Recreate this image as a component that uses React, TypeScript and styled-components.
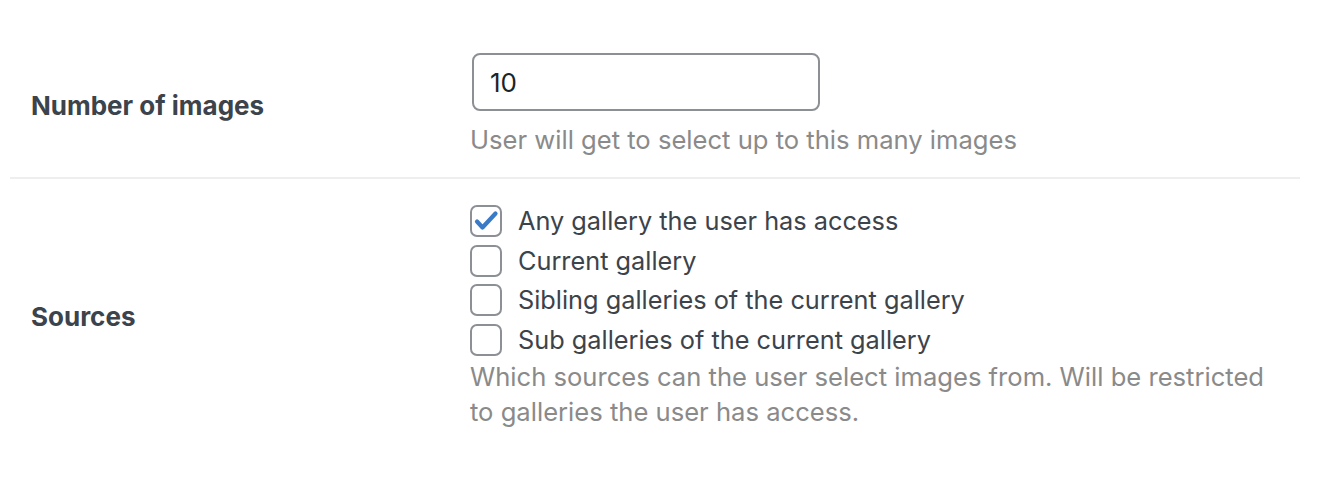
import React from 'react';
import styled, { createGlobalStyle } from 'styled-components';

const GlobalStyle = createGlobalStyle`
	body {
		margin: 0;
		background: #ffffff;
		font-family: Inter, "Liberation Sans", Arial, sans-serif;
		color: #3c434a;
	}
`;

const Page = styled.div`
	padding: 27px 40px 0 10px;
	width: 1290px;
`;

const Row = styled.div`
	display: grid;
	grid-template-columns: 460px 1fr;
	align-items: center;
	padding: 26px 0 20px;

	& + & {
		border-top: 2px solid #eeeeee;
		padding-top: 26px;
	}
`;

const Label = styled.div`
	padding-left: 21px;
	font-size: 26px;
	font-weight: 700;
	color: #3c434a;
`;

const Field = styled.div`
	display: flex;
	flex-direction: column;
	align-items: flex-start;
`;

const NumberInput = styled.input`
	box-sizing: border-box;
	width: 348px;
	height: 58px;
	padding: 0 16px;
	margin-left: 2px;
	border: 2px solid #8c8f94;
	border-radius: 8px;
	font-family: Inter, "Liberation Sans", Arial, sans-serif;
	font-size: 26px;
	color: #1d2327;
	outline: none;
`;

const Description = styled.p<{ $gap?: number }>`
	margin: ${p => p.$gap ?? 11}px 0 0;
	font-size: 25.6px;
	line-height: 35px;
	color: #8a8a8a;
	max-width: 800px;
`;

const Options = styled.div`
	display: flex;
	flex-direction: column;
	gap: 7.5px;
`;

const Option = styled.label`
	display: flex;
	align-items: center;
	gap: 16px;
	font-size: 25.3px;
	line-height: 32px;
	color: #3c434a;
`;

const Box = styled.span`
	position: relative;
	box-sizing: border-box;
	width: 32px;
	height: 32px;
	border: 2px solid #8c8f94;
	border-radius: 7px;
	background: #fff;
	flex-shrink: 0;

	svg {
		position: absolute;
		left: -2px;
		top: -2px;
	}
`;

const Check = () => (
	<svg width="32" height="32" viewBox="0 0 32 32">
		<path d="M7 16.5 L12.5 22.5 L25.5 8.5" fill="none" stroke="#3a7bc8" strokeWidth="4.2" strokeLinecap="round" strokeLinejoin="round" />
	</svg>
);

const sources = [
	{ label: 'Any gallery the user has access', checked: true },
	{ label: 'Current gallery', checked: false },
	{ label: 'Sibling galleries of the current gallery', checked: false },
	{ label: 'Sub galleries of the current gallery', checked: false },
];

export default function App() {
	return (
		<>
			<GlobalStyle />
			<Page>
				<Row>
					<Label>Number of images</Label>
					<Field>
						<NumberInput type="text" defaultValue="10" />
						<Description>User will get to select up to this many images</Description>
					</Field>
				</Row>
				<Row>
					<Label>Sources</Label>
					<Field>
						<Options>
							{sources.map(s => (
								<Option key={s.label}>
									<Box>{s.checked && <Check />}</Box>
									{s.label}
								</Option>
							))}
						</Options>
						<Description $gap={3}>
							Which sources can the user select images from. Will be restricted to galleries the user has access.
						</Description>
					</Field>
				</Row>
			</Page>
		</>
	);
}
